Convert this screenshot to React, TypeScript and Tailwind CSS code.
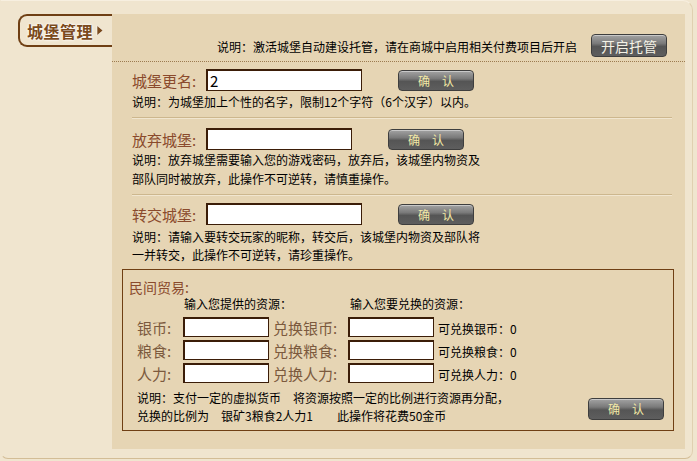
import React from "react";

const FONT = "font-['Noto_Sans_CJK_SC','Noto_Sans',sans-serif]";

function GrayButton({ label, className = "", textClass = "" }: { label: string; className?: string; textClass?: string }) {
  return (
    <div
      className={`relative flex items-center justify-center rounded-[4px] border border-[#3e3e3e] bg-[linear-gradient(#a3a3a3_0%,#7a7a7a_40%,#555555_55%,#5e5e5e_100%)] shadow-[inset_0_1px_0_#c8c8c8] ${className}`}
    >
      <span className={`leading-none ${textClass}`}>{label}</span>
    </div>
  );
}

function ConfirmButton({ className = "" }: { className?: string }) {
  return (
    <GrayButton
      label="确　认"
      className={`h-[21px] w-[76px] shrink-0 ${className}`}
      textClass="text-[12px] text-[#f2e9a6]"
    />
  );
}

function TextInput({ w, h = 22, value = "" }: { w: number; h?: number; value?: string }) {
  return (
    <div
      className="flex shrink-0 items-center border border-[#3b1d08] border-l-2 border-t-2 bg-white pl-[2px] text-[15px] leading-none text-black"
      style={{ width: w, height: h }}
    >
      {value}
    </div>
  );
}

function Separator() {
  return <div className="ml-[20px] mr-[13px] h-[2px] border-t border-[#cdb78e] border-b border-b-[#f1e6d0]" />;
}

export default function App() {
  return (
    <div className={`h-[461px] w-[697px] overflow-hidden bg-[#f0e5cf] ${FONT}`}>
      <div className="h-[459px] w-[693px] rounded-b-[8px] rounded-tr-[10px] border border-t-[#f7efe0] border-r-[#e0d0b0] border-b-[#d3bd96] border-l-[#f0e5cf]">
        <div className="flex pt-[13px]">
          {/* tab column */}
          <div className="w-[111px] shrink-0 pl-[17px]">
            <div className="flex h-[33px] w-[94px] items-center rounded-l-[9px] border-2 border-r-0 border-[#6f3f14] pl-[7px]">
              <span className="text-[16px] font-bold leading-none tracking-[0.5px] text-[#7b4a1c] [text-shadow:0_0_2px_#fff,0_0_3px_#fff]">
                城堡管理
              </span>
              <svg width="8" height="11" viewBox="0 0 8 11" className="ml-[3px]">
                <path d="M1 0.5 L7 5.5 L1 10.5 Z" fill="#7b4a1c" stroke="#fff" strokeWidth="0.6" />
              </svg>
            </div>
          </div>

          {/* main panel */}
          <div className="flex h-[435px] w-[573px] flex-col bg-[#e6d5b4]">
            {/* top row */}
            <div className="flex items-end justify-end gap-[14px] pr-[18px] pt-[20px]">
              <span className="pb-[2px] text-[12px] leading-[16px] text-black">
                说明：激活城堡自动建设托管，请在商城中启用相关付费项目后开启
              </span>
              <GrayButton
                label="开启托管"
                className="h-[23px] w-[76px] shrink-0"
                textClass="text-[14px] text-[#f4f2e6]"
              />
            </div>
            <div className="mt-[4px] border-t border-dotted border-[#9c7b50]" />

            {/* section 1 */}
            <div className="mt-[7px] flex items-center pl-[20px]">
              <span className="w-[74px] shrink-0 text-[15px] leading-none text-[#8a4a2c]">城堡更名:</span>
              <TextInput w={156} value="2" />
              <ConfirmButton className="ml-[36px] mt-[1px]" />
            </div>
            <div className="mt-[2px] pl-[20px] text-[12px] leading-[18px] text-black">
              说明：为城堡加上个性的名字，限制12个字符（6个汉字）以内。
            </div>
            <div className="mt-[6px]">
              <Separator />
            </div>

            {/* section 2 */}
            <div className="mt-[9px] flex items-center pl-[20px]">
              <span className="w-[74px] shrink-0 text-[15px] leading-none text-[#8a4a2c]">放弃城堡:</span>
              <TextInput w={146} />
              <ConfirmButton className="ml-[36px] mt-[1px]" />
            </div>
            <div className="pl-[20px] text-[12px] leading-[19px] text-black">
              <div>说明：放弃城堡需要输入您的游戏密码，放弃后，该城堡内物资及</div>
              <div>部队同时被放弃，此操作不可逆转，请慎重操作。</div>
            </div>
            <div className="mt-[6px]">
              <Separator />
            </div>

            {/* section 3 */}
            <div className="mt-[7px] flex items-center pl-[20px]">
              <span className="w-[74px] shrink-0 text-[15px] leading-none text-[#8a4a2c]">转交城堡:</span>
              <TextInput w={156} />
              <ConfirmButton className="ml-[36px] mt-[1px]" />
            </div>
            <div className="mt-[3px] pl-[20px] text-[12px] leading-[18px] text-black">
              <div>说明：请输入要转交玩家的昵称，转交后，该城堡内物资及部队将</div>
              <div>一并转交，此操作不可逆转，请珍重操作。</div>
            </div>

            {/* trade box */}
            <div className="ml-[10px] mt-[5px] flex h-[162px] w-[552px] flex-col border border-[#6f3f14] pl-[6px] pt-[8px]">
              <div className="text-[14px] leading-[18px] text-[#8a4a2c]">民间贸易:</div>
              <div className="flex text-[12px] leading-[16px] text-black">
                <span className="ml-[55px]">输入您提供的资源：</span>
                <span className="ml-[58px]">输入您要兑换的资源：</span>
              </div>
              <div className="mt-[5px] flex flex-col gap-[3px] pl-[8px]">
                {[
                  ["银币:", "兑换银币:", "可兑换银币：0"],
                  ["粮食:", "兑换粮食:", "可兑换粮食：0"],
                  ["人力:", "兑换人力:", "可兑换人力：0"],
                ].map(([a, b, c]) => (
                  <div key={a} className="flex h-[20px] items-center">
                    <span className="w-[46px] shrink-0 text-[15px] leading-none text-[#7c5a3e]">{a}</span>
                    <TextInput w={86} h={20} />
                    <span className="ml-[4px] w-[75px] shrink-0 text-[15px] leading-none text-[#7c5a3e]">{b}</span>
                    <TextInput w={86} h={20} />
                    <span className="ml-[4px] pt-[3px] text-[12px] leading-none text-black">{c}</span>
                  </div>
                ))}
              </div>
              <div className="mt-[6px] flex items-start justify-between pl-[8px] pr-[9px]">
                <div className="text-[12px] leading-[18px] text-black">
                  <div>说明：支付一定的虚拟货币　将资源按照一定的比例进行资源再分配，</div>
                  <div>兑换的比例为　银矿3粮食2人力1　　此操作将花费50金币</div>
                </div>
                <ConfirmButton className="mt-[9px] h-[22px]" />
              </div>
            </div>
          </div>
        </div>
      </div>
    </div>
  );
}
